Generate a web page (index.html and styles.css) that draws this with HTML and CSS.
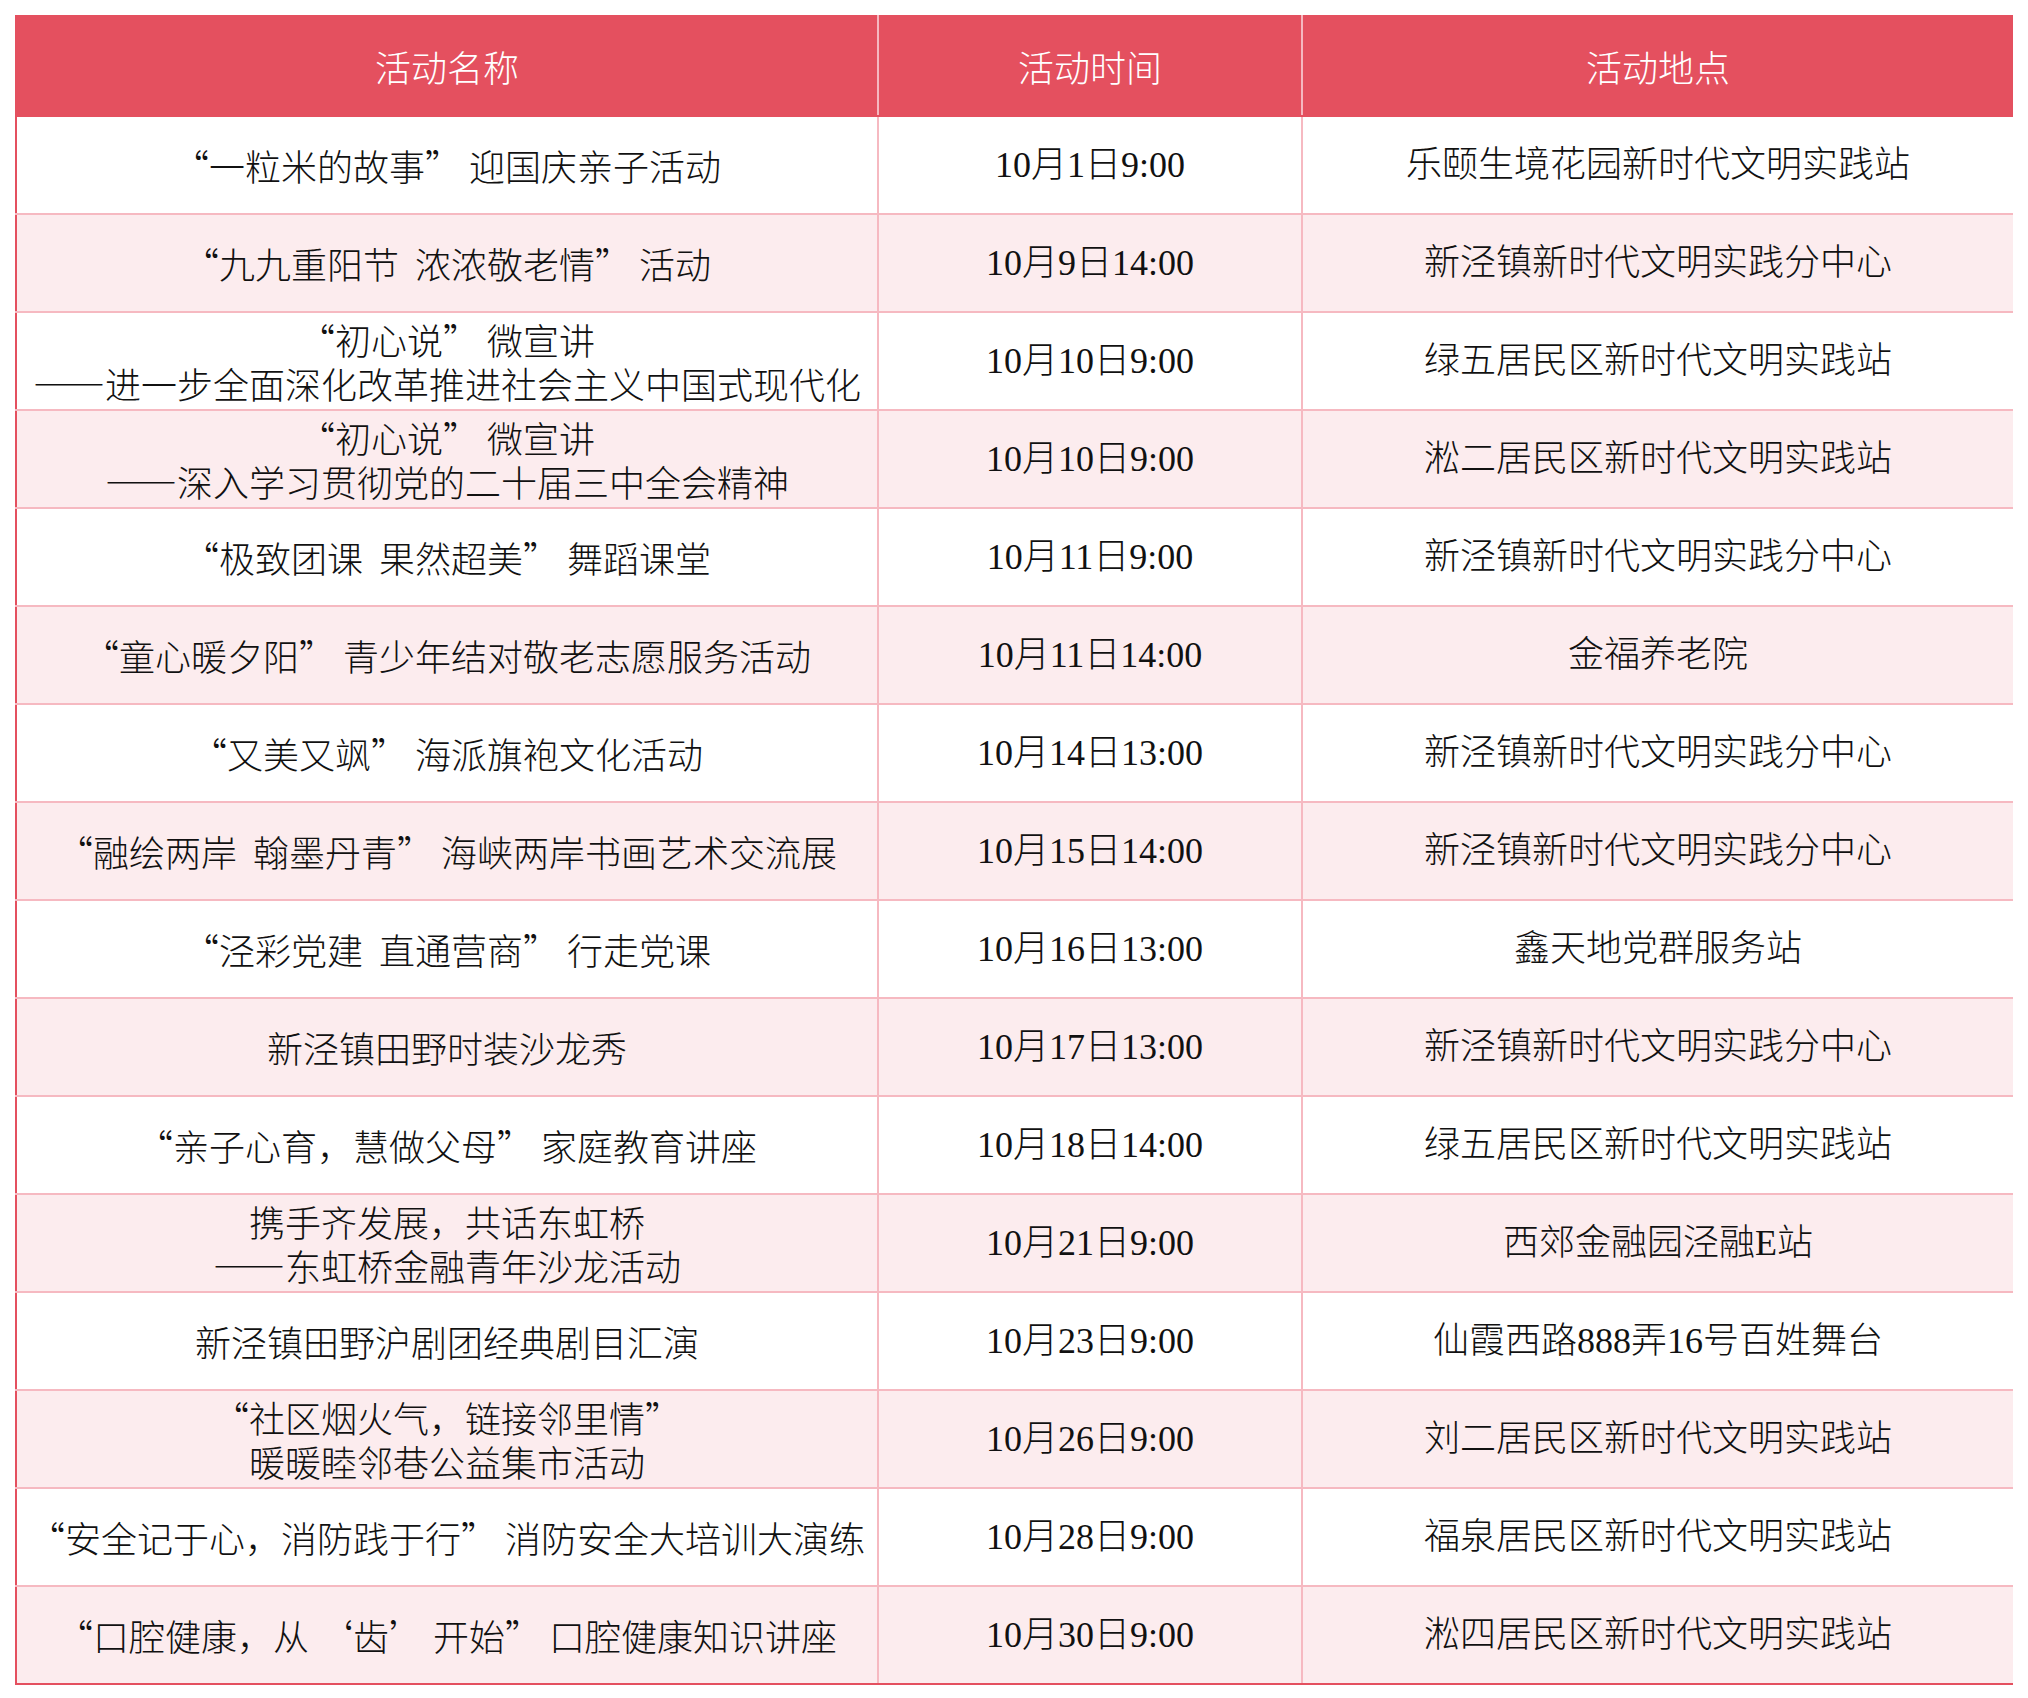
FILE: index.html
```html
<!DOCTYPE html>
<html lang="zh-CN">
<head>
<meta charset="utf-8">
<title>活动安排</title>
<link rel="stylesheet" href="styles.css">
</head>
<body>
<table class="schedule">
  <colgroup>
    <col class="col-name">
    <col class="col-time">
    <col class="col-place">
  </colgroup>
  <thead>
    <tr>
      <th>活动名称</th>
      <th>活动时间</th>
      <th>活动地点</th>
    </tr>
  </thead>
  <tbody>
    <tr><td class="name">“一粒米的故事” 迎国庆亲子活动</td><td class="time">10月1日9:00</td><td class="place">乐颐生境花园新时代文明实践站</td></tr>
    <tr><td class="name">“九九重阳节&nbsp;&nbsp;浓浓敬老情” 活动</td><td class="time">10月9日14:00</td><td class="place">新泾镇新时代文明实践分中心</td></tr>
    <tr><td class="name">“初心说” 微宣讲<br>——进一步全面深化改革推进社会主义中国式现代化</td><td class="time">10月10日9:00</td><td class="place">绿五居民区新时代文明实践站</td></tr>
    <tr><td class="name">“初心说” 微宣讲<br>——深入学习贯彻党的二十届三中全会精神</td><td class="time">10月10日9:00</td><td class="place">淞二居民区新时代文明实践站</td></tr>
    <tr><td class="name">“极致团课&nbsp;&nbsp;果然超美” 舞蹈课堂</td><td class="time">10月11日9:00</td><td class="place">新泾镇新时代文明实践分中心</td></tr>
    <tr><td class="name">“童心暖夕阳” 青少年结对敬老志愿服务活动</td><td class="time">10月11日14:00</td><td class="place">金福养老院</td></tr>
    <tr><td class="name">“又美又飒” 海派旗袍文化活动</td><td class="time">10月14日13:00</td><td class="place">新泾镇新时代文明实践分中心</td></tr>
    <tr><td class="name">“融绘两岸&nbsp;&nbsp;翰墨丹青” 海峡两岸书画艺术交流展</td><td class="time">10月15日14:00</td><td class="place">新泾镇新时代文明实践分中心</td></tr>
    <tr><td class="name">“泾彩党建&nbsp;&nbsp;直通营商” 行走党课</td><td class="time">10月16日13:00</td><td class="place">鑫天地党群服务站</td></tr>
    <tr><td class="name">新泾镇田野时装沙龙秀</td><td class="time">10月17日13:00</td><td class="place">新泾镇新时代文明实践分中心</td></tr>
    <tr><td class="name">“亲子心育，慧做父母” 家庭教育讲座</td><td class="time">10月18日14:00</td><td class="place">绿五居民区新时代文明实践站</td></tr>
    <tr><td class="name">携手齐发展，共话东虹桥<br>——东虹桥金融青年沙龙活动</td><td class="time">10月21日9:00</td><td class="place">西郊金融园泾融E站</td></tr>
    <tr><td class="name">新泾镇田野沪剧团经典剧目汇演</td><td class="time">10月23日9:00</td><td class="place">仙霞西路888弄16号百姓舞台</td></tr>
    <tr><td class="name">“社区烟火气，链接邻里情”<br>暖暖睦邻巷公益集市活动</td><td class="time">10月26日9:00</td><td class="place">刘二居民区新时代文明实践站</td></tr>
    <tr><td class="name">“安全记于心，消防践于行” 消防安全大培训大演练</td><td class="time">10月28日9:00</td><td class="place">福泉居民区新时代文明实践站</td></tr>
    <tr><td class="name">“口腔健康，从 ‘齿’ 开始” 口腔健康知识讲座</td><td class="time">10月30日9:00</td><td class="place">淞四居民区新时代文明实践站</td></tr>
  </tbody>
</table>
</body>
</html>
```

FILE: styles.css
```css
html, body {
  background: #ffffff;
}

body {
  margin: 15px;
  font-family: "Noto Sans CJK SC", "Noto Sans", sans-serif;
  color: #111111;
}

.schedule {
  width: 1998px;
  table-layout: fixed;
  border-collapse: collapse;
  border: 2px solid #e4505f;
}

.col-name { width: 862px; }
.col-time { width: 424px; }
.col-place { width: 712px; }

.schedule th {
  height: 98px;
  padding: 0;
  background: #e4505f;
  color: #ffffff;
  font-size: 36px;
  font-weight: 300;
  line-height: 44px;
  text-align: center;
  vertical-align: middle;
  border-left: 2px solid #f5b8c0;
  border-right: 2px solid #f5b8c0;
  border-top: 2px solid #e4505f;
  border-bottom: 2px solid #e4505f;
}

.schedule td {
  height: 96px;
  padding: 0;
  font-size: 36px;
  font-weight: 300;
  line-height: 44px;
  text-align: center;
  vertical-align: middle;
  white-space: nowrap;
  border: 2px solid #f6b9c1;
}

.schedule tbody tr:nth-child(even) td {
  background: #fcecee;
}

.schedule th:first-child,
.schedule td:first-child {
  border-left: 2px solid #e4505f;
}

.schedule th:last-child,
.schedule td:last-child {
  border-right: 2px solid #e4505f;
}

.schedule tbody tr:last-child td {
  border-bottom: 2px solid #e4505f;
}

.schedule td.time,
.schedule td.place {
  font-family: "Liberation Serif", "Noto Sans CJK SC", serif;
}
```
